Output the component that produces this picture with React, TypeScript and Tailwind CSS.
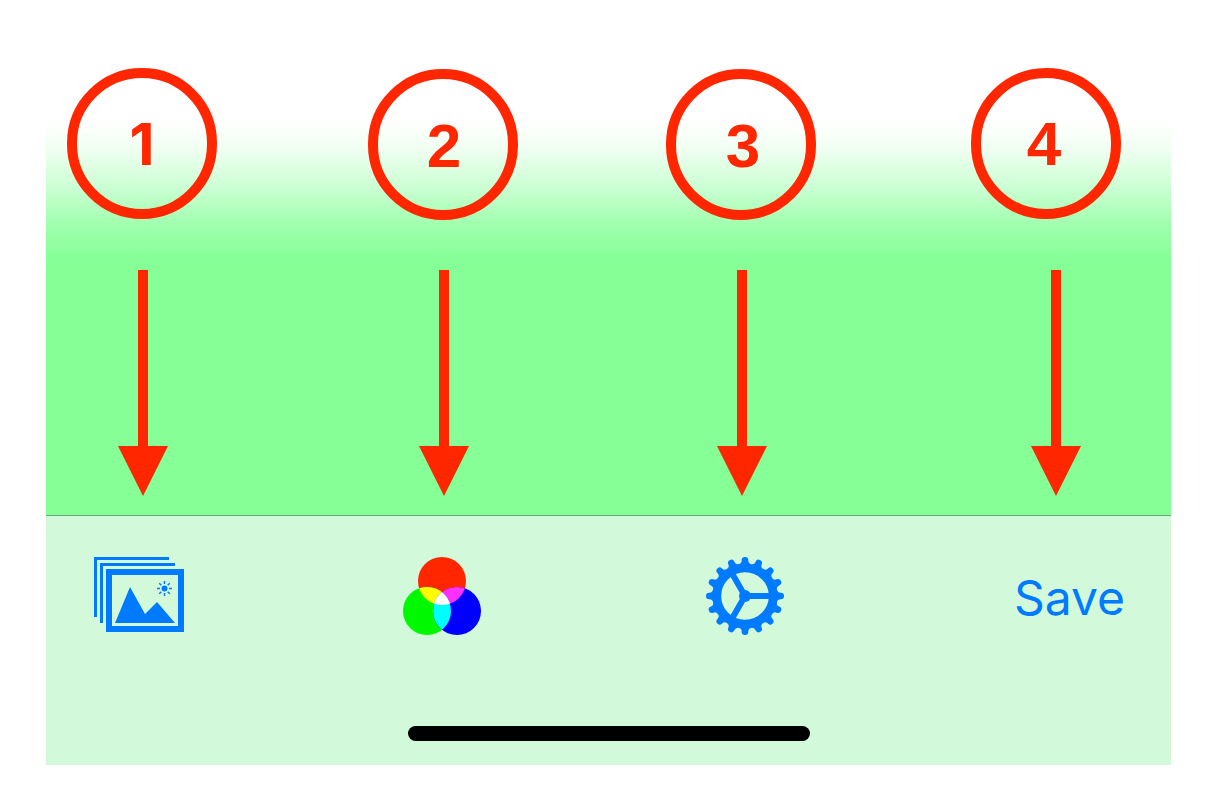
import React from "react";

const callouts = [
  { id: "1", font: "font-['Inter',sans-serif] text-[58px]", align: "self-start" },
  { id: "2", font: "font-['Liberation_Sans',sans-serif] text-[62px]", align: "self-end pt-0.5 pl-0.5" },
  { id: "3", font: "font-['Liberation_Sans',sans-serif] text-[62px]", align: "self-end pt-0.5 pl-1" },
  { id: "4", font: "font-['Liberation_Sans',sans-serif] text-[62px]", align: "self-start pr-1" },
];

function Arrow() {
  return (
    <svg className="h-[226px] w-[50px]" viewBox="0 0 50 226" fill="#ff2600" aria-hidden="true">
      <path d="M20 0H30V176H50L25 226L0 176H20Z" />
    </svg>
  );
}

function PhotosIcon() {
  const rays = [0, 45, 90, 135, 180, 225, 270, 315];
  return (
    <svg className="h-[75px] w-[90px]" viewBox="0 0 90 75" fill="#007aff" aria-hidden="true">
      <path d="M0 0H75V3H3V60H0Z" />
      <path d="M6 6H81V9H9V66H6Z" />
      <path fillRule="evenodd" d="M12 12H90V75H12ZM18 18V69H84V18Z" />
      <path d="M21 66L36 30L51 57L63 45L81 66Z" />
      <circle cx="70.5" cy="31.5" r="3" />
      {rays.map((a) => (
        <path key={a} d="M69.75 24H71.25V27H69.75Z" transform={`rotate(${a} 70.5 31.5)`} />
      ))}
    </svg>
  );
}

function ColorsIcon() {
  return (
    <svg className="h-[78px] w-[78px]" viewBox="0 0 78 78" aria-hidden="true">
      <defs>
        <clipPath id="red-disc">
          <circle cx="39" cy="24" r="24" />
        </clipPath>
        <clipPath id="green-disc">
          <circle cx="24" cy="54" r="24" />
        </clipPath>
      </defs>
      <circle cx="39" cy="24" r="24" fill="#ff2600" />
      <circle cx="24" cy="54" r="24" fill="#00f900" />
      <circle cx="54" cy="54" r="24" fill="#0000ff" />
      <g clipPath="url(#red-disc)">
        <circle cx="24" cy="54" r="24" fill="#fffb00" />
        <circle cx="54" cy="54" r="24" fill="#ff2fff" />
      </g>
      <g clipPath="url(#green-disc)">
        <circle cx="54" cy="54" r="24" fill="#00fdff" />
        <g clipPath="url(#red-disc)">
          <circle cx="54" cy="54" r="24" fill="#ffffff" />
        </g>
      </g>
    </svg>
  );
}

function GearIcon() {
  const teeth = Array.from({ length: 16 }, (_, i) => i * 22.5);
  return (
    <svg className="h-[78px] w-[78px]" viewBox="-39 -39 78 78" fill="#007aff" aria-hidden="true">
      <circle r="28.2" fill="none" stroke="#007aff" strokeWidth="8.8" />
      {teeth.map((a) => (
        <path
          key={a}
          transform={`rotate(${a})`}
          d="M-6.4 -31.8Q-3.2 -32.5 -3.3 -35.7A3.3 3.3 0 0 1 3.3 -35.7Q3.2 -32.5 6.4 -31.8Z"
        />
      ))}
      <circle r="6" />
      {[90, 210, 330].map((a) => (
        <path key={a} transform={`rotate(${a})`} d="M-3 0V-27H3V0Z" />
      ))}
    </svg>
  );
}

export default function App() {
  return (
    <main className="min-h-screen bg-white pl-[46px] pr-[37px]">
      <section className="bg-[linear-gradient(to_bottom,#ffffff_0px,#ffffff_122px,#effff1_150px,#c8ffd1_190px,#9fffad_225px,#86ff97_260px)] pb-[19px] pt-[68px]">
        <div className="grid h-[152px] grid-cols-[301fr_298fr_305fr_200fr] pl-[21px]">
          {callouts.map((c) => (
            <div
              key={c.id}
              className={`flex h-[151px] w-[150px] items-center justify-center rounded-full border-[10px] border-[#ff2600] leading-none font-bold text-[#ff2600] ${c.font} ${c.align}`}
            >
              {c.id}
            </div>
          ))}
        </div>
        <div className="mt-[50px] grid grid-cols-[301fr_298fr_314fr_140fr] pl-[72px]">
          {callouts.map((c) => (
            <Arrow key={c.id} />
          ))}
        </div>
      </section>

      <footer className="border-t border-[#62ae72] bg-[#d2f9d9] pb-6 pt-[41px]">
        <nav className="grid grid-cols-[309fr_303fr_308fr_157fr] items-start justify-items-start pl-12">
          <button type="button" aria-label="Photos">
            <PhotosIcon />
          </button>
          <button type="button" aria-label="Colors">
            <ColorsIcon />
          </button>
          <button type="button" aria-label="Settings">
            <GearIcon />
          </button>
          <button
            type="button"
            className="h-[78px] pt-1 font-['Inter',sans-serif] text-[48px] leading-none text-[#007aff]"
          >
            Save
          </button>
        </nav>
        <div className="mx-auto mt-[91px] h-[15px] w-[402px] rounded-full bg-black" />
      </footer>
    </main>
  );
}
